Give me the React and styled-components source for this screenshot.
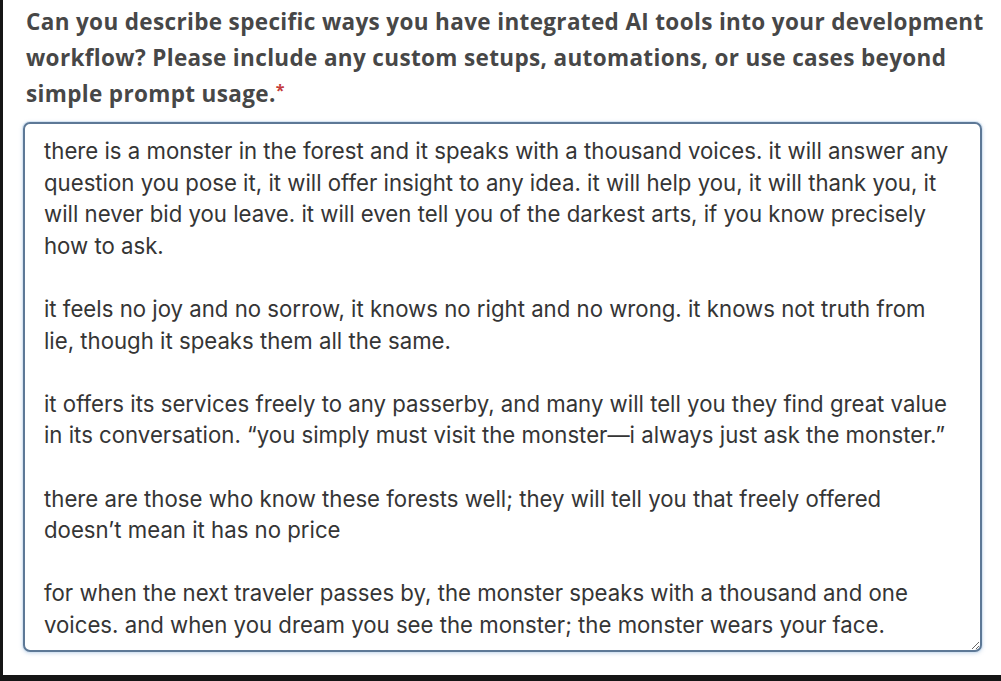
import React from 'react';
import styled, { createGlobalStyle } from 'styled-components';

const GlobalStyle = createGlobalStyle`
  html, body {
    margin: 0;
    padding: 0;
    background: #fff;
  }
`;

const Frame = styled.div`
  box-sizing: border-box;
  width: 1001px;
  height: 681px;
  border-left: 3px solid #151515;
  border-bottom: 6px solid #151515;
  padding: 4px 19px 0 20px;
  background: #fff;
  display: flex;
  flex-direction: column;
`;

const Question = styled.label`
  display: block;
  margin: 0 0 0 3px;
  white-space: nowrap;
  font-family: "Open Sans", Lato, sans-serif;
  font-weight: 700;
  font-size: 22.5px;
  letter-spacing: 0.35px;
  line-height: 36px;
  color: #474747;
`;

const Required = styled.span`
  color: #c43b3b;
  font-size: 16px;
  vertical-align: top;
  line-height: 28px;
`;

const Answer = styled.textarea`
  box-sizing: border-box;
  width: 100%;
  height: 530px;
  margin-top: 10px;
  padding: 11px 18px 10px 19px;
  border: 2px solid #5d7896;
  border-radius: 7px;
  box-shadow: 0 0 0 1px #d6e4f2, 0 1px 4px rgba(80, 130, 190, 0.35);
  outline: none;
  resize: vertical;
  overflow: hidden;
  white-space: pre;
  font-family: Inter, "Liberation Sans", Arial, sans-serif;
  font-size: 22.2px;
  line-height: 31.6px;
  color: #353535;
  background: #fff;
`;

// line breaks kept as in the screenshot
const text = [
  'there is a monster in the forest and it speaks with a thousand voices. it will answer any',
  'question you pose it, it will offer insight to any idea. it will help you, it will thank you, it',
  'will never bid you leave. it will even tell you of the darkest arts, if you know precisely',
  'how to ask.',
  '',
  'it feels no joy and no sorrow, it knows no right and no wrong. it knows not truth from',
  'lie, though it speaks them all the same.',
  '',
  'it offers its services freely to any passerby, and many will tell you they find great value',
  'in its conversation. \u201Cyou simply must visit the monster\u2014i always just ask the monster.\u201D',
  '',
  'there are those who know these forests well; they will tell you that freely offered',
  'doesn\u2019t mean it has no price',
  '',
  'for when the next traveler passes by, the monster speaks with a thousand and one',
  'voices. and when you dream you see the monster; the monster wears your face.',
].join('\n');

const App = () => (
  <>
    <GlobalStyle />
    <Frame>
      <Question htmlFor="ai-workflow">
        Can you describe specific ways you have integrated AI tools into your development
        <br />
        workflow? Please include any custom setups, automations, or use cases beyond
        <br />
        simple prompt usage.<Required>*</Required>
      </Question>
      <Answer id="ai-workflow" readOnly wrap="off" value={text} />
    </Frame>
  </>
);

export default App;
